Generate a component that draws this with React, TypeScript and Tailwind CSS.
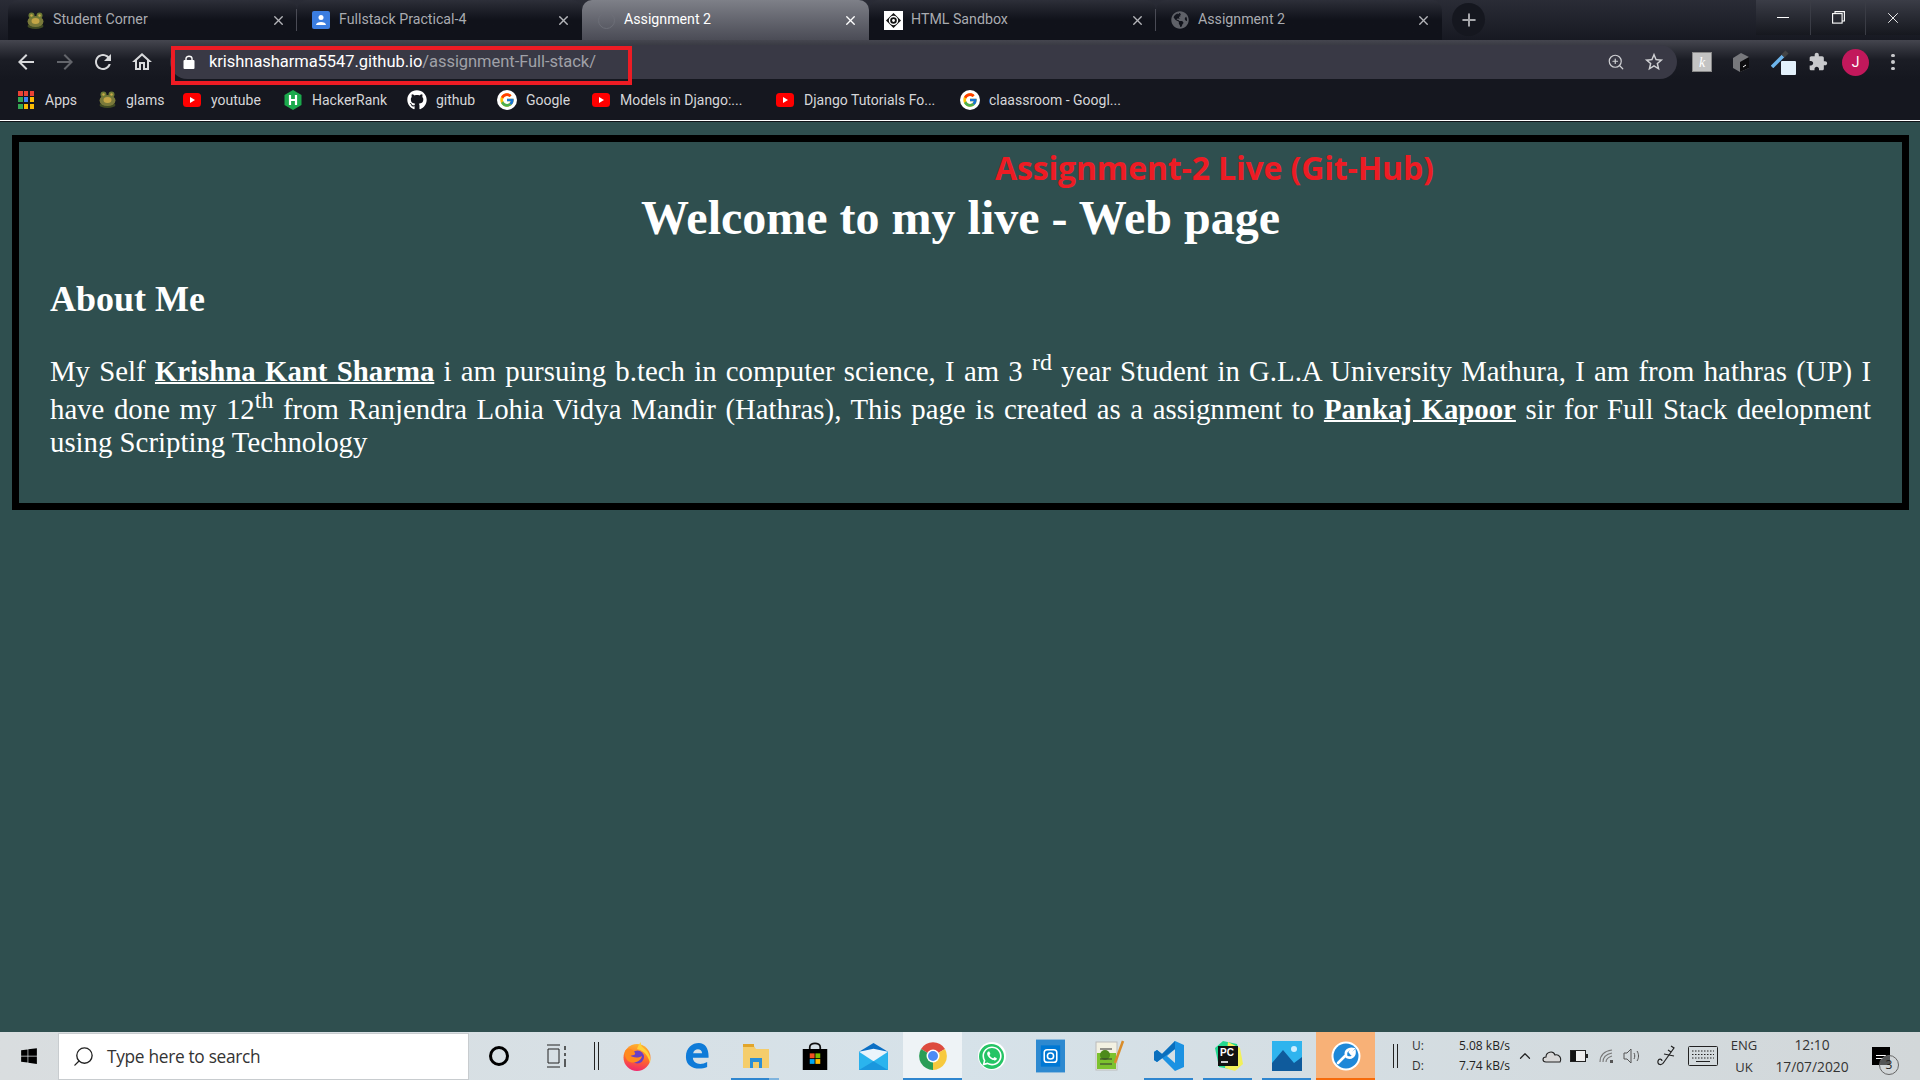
import React from "react";
import { X, Plus, ZoomIn, Search, ChevronUp } from "lucide-react";
import { FaGithub, FaWindows, FaWhatsapp, FaGlobeAmericas } from "react-icons/fa";
import { FcGoogle } from "react-icons/fc";

const uiFont = "font-['Roboto','Liberation_Sans',sans-serif]";

function Mat({ d, size = 24, className }: { d: string; size?: number; className?: string }) {
  return (
    <svg width={size} height={size} viewBox="0 0 24 24" fill="currentColor" className={className}>
      <path d={d} />
    </svg>
  );
}
const BACK = "M20 11H7.83l5.59-5.59L12 4l-8 8 8 8 1.41-1.41L7.83 13H20v-2z";
const FORWARD = "M4 13h12.17l-5.59 5.59L12 20l8-8-8-8-1.41 1.41L16.17 11H4v2z";
const RELOAD = "M17.65 6.35C16.2 4.9 14.21 4 12 4c-4.42 0-7.99 3.58-7.99 8s3.57 8 7.99 8c3.73 0 6.84-2.55 7.73-6h-2.08c-.82 2.33-3.04 4-5.65 4-3.31 0-6-2.69-6-6s2.69-6 6-6c1.66 0 3.14.69 4.22 1.78L13 11h7V4l-2.35 2.35z";
const HOME = "M12 5.69l5 4.5V18h-2v-6H9v6H7v-7.81l5-4.5M12 3L2 12h3v8h6v-6h2v6h6v-8h3L12 3z";
const STAR = "M22 9.24l-7.19-.62L12 2 9.19 8.63 2 9.24l5.46 4.73L5.82 21 12 17.27 18.18 21l-1.63-7.03L22 9.24zM12 15.4l-3.76 2.27 1-4.28-3.32-2.88 4.38-.38L12 6.1l1.71 4.04 4.38.38-3.32 2.88 1 4.28L12 15.4z";
const EXT = "M20.5 11H19V7c0-1.1-.9-2-2-2h-4V3.5C13 2.12 11.88 1 10.5 1S8 2.12 8 3.5V5H4c-1.1 0-1.99.9-1.99 2v3.8H3.5c1.49 0 2.7 1.21 2.7 2.7s-1.21 2.7-2.7 2.7H2V20c0 1.1.9 2 2 2h3.8v-1.5c0-1.49 1.21-2.7 2.7-2.7 1.49 0 2.7 1.21 2.7 2.7V22H17c1.1 0 2-.9 2-2v-4h1.5c1.38 0 2.5-1.12 2.5-2.5S21.88 11 20.5 11z";

function Frog() {
  return (
    <svg width="19" height="19" viewBox="0 0 19 19">
      <ellipse cx="9.5" cy="15" rx="8" ry="3" fill="#3f4a22" />
      <ellipse cx="9.5" cy="10.5" rx="8" ry="5.5" fill="#79793a" />
      <circle cx="5.5" cy="4.5" r="3" fill="#6d7a35" />
      <circle cx="13.5" cy="4.5" r="3" fill="#6d7a35" />
      <circle cx="5.5" cy="4.5" r="1.2" fill="#caa94a" />
      <circle cx="13.5" cy="4.5" r="1.2" fill="#caa94a" />
      <ellipse cx="9.5" cy="10" rx="4" ry="3" fill="#c3a546" />
    </svg>
  );
}
function Docs() {
  return (
    <svg width="20" height="20" viewBox="0 0 20 20">
      <rect x="1" y="1" width="18" height="18" rx="2" fill="#3b7de0" />
      <circle cx="10" cy="7.5" r="2.5" fill="#fff" />
      <path d="M5 15 C5 11 15 11 15 15 Z" fill="#fff" />
    </svg>
  );
}
function Sandbox() {
  return (
    <svg width="19" height="19" viewBox="0 0 19 19">
      <rect width="19" height="19" fill="#fff" />
      <path d="M9.5 2 L17 9.5 L9.5 17 L2 9.5 Z" fill="#111" />
      <circle cx="9.5" cy="9.5" r="4" fill="none" stroke="#fff" strokeWidth="1.4" />
      <circle cx="9.5" cy="9.5" r="1.4" fill="#fff" />
    </svg>
  );
}
function Tab({ title, icon, active, sep, width, first }: { title: string; icon?: React.ReactNode; active?: boolean; sep?: boolean; width: string; first?: boolean }) {
  return (
    <div className={`relative h-[40px] shrink-0 flex items-center rounded-t-[10px] pr-[11px] ${first ? "pl-[16px]" : "pl-[13px]"} ${width} ${active ? "bg-gradient-to-b from-[#7e8088] to-[#4b4c56]" : "bg-gradient-to-b from-[#2d2f39] via-[#10121a] to-[#10121a]"}`}>
      <div className="w-[22px] h-[20px] flex items-center justify-center shrink-0">{icon}</div>
      <span className={`ml-[7px] text-[14.2px] flex-1 ${active ? "text-white" : "text-[#a9abb0]"}`}>{title}</span>
      <X size={15} strokeWidth={2.2} className={active ? "text-white" : "text-[#b4b5b9]"} />
      {sep && <div className="absolute right-0 top-[9px] h-[22px] w-px bg-[#4a4b55]" />}
    </div>
  );
}
function YT() {
  return (
    <svg width="18" height="14" viewBox="0 0 18 14">
      <rect width="18" height="14" rx="3.5" fill="#f00" />
      <path d="M7 4 L12 7 L7 10 Z" fill="#fff" />
    </svg>
  );
}
function HR() {
  return (
    <svg width="18" height="20" viewBox="0 0 18 20">
      <path d="M9 0 L17.5 5 V15 L9 20 L0.5 15 V5 Z" fill="#1ba94c" />
      <path d="M6 5 V15 M12 5 V15 M6 10 H12" stroke="#fff" strokeWidth="2.2" />
    </svg>
  );
}
function Apps() {
  const colors = ["#ea4335", "#ea4335", "#ea4335", "#34a853", "#4285f4", "#fbbc04", "#34a853", "#fbbc04", "#fbbc04"];
  return (
    <div className="grid grid-cols-3 gap-[1.5px] w-[16px]">
      {colors.map((c, i) => (
        <div key={i} className="h-[5px] w-[4.5px]" style={{ backgroundColor: c }} />
      ))}
    </div>
  );
}
function Bookmark({ icon, label, w }: { icon: React.ReactNode; label: string; w: string }) {
  return (
    <div className={`flex items-center shrink-0 ${w}`}>
      <div className="flex items-center justify-center w-[20px] h-[20px] mr-[9px]">{icon}</div>
      <span className="text-[14px] pt-[1px] text-[#d5d6d9]">{label}</span>
    </div>
  );
}
function GoogleG() {
  return (
    <div className="w-[20px] h-[20px] rounded-full bg-white flex items-center justify-center">
      <FcGoogle size={16} />
    </div>
  );
}
function Firefox() {
  return (
    <svg width="28" height="29" viewBox="0 0 28 29">
      <defs>
        <linearGradient id="ff" x1="0.6" y1="0" x2="0.4" y2="1">
          <stop offset="0" stopColor="#ffb52e" />
          <stop offset="0.55" stopColor="#ff6a2b" />
          <stop offset="1" stopColor="#f0246e" />
        </linearGradient>
      </defs>
      <circle cx="14" cy="15.5" r="13.5" fill="url(#ff)" />
      <path d="M18 0 C17 4 20 5 23 8 C27 12 28 17 27 21 C24 10 18 8 14 7 C15 4 16 2 18 0 Z" fill="#ffd23a" />
      <circle cx="14.5" cy="15" r="6.5" fill="#6a3fc4" />
      <path d="M2 9 C5 5 10 7 12 11 C13 13 9 14 6 13 C9 15 14 17 19 14 C18 20 9 23 4 18 C2 15 1 12 2 9 Z" fill="#ff8a1e" />
    </svg>
  );
}
function Edge() {
  return (
    <svg width="24" height="26" viewBox="0 0 26 28">
      <path d="M1 15 C1 5 8 0 15 0 C22 0 26 6 25.5 16 H8.5 C8.8 22.5 17 24.5 24 20.5 V26 C14 30 1 27 1 15 Z M8.8 11 H18.5 C18.5 5.5 10 5 8.8 11 Z" fill="#0f7bd8" fillRule="evenodd" />
    </svg>
  );
}
function Explorer() {
  return (
    <svg width="26" height="24" viewBox="0 0 26 24">
      <path d="M0 2 H11 L13 5 H26 V24 H0 Z" fill="#f5cd6b" />
      <path d="M0 0 H11 V3 H0 Z" fill="#e2a52a" />
      <path d="M7 24 V14 H19 V24 H16 V18 H10 V24 Z" fill="#2b8fd6" />
    </svg>
  );
}
function Store() {
  return (
    <svg width="28" height="28" viewBox="0 0 28 32">
      <path d="M8 9 V6 C8 0 20 0 20 6 V9" fill="none" stroke="#111" strokeWidth="2" />
      <rect y="8" width="28" height="24" fill="#000" />
      <rect x="8" y="13" width="5.5" height="5.5" fill="#f25022" />
      <rect x="14.5" y="13" width="5.5" height="5.5" fill="#7fba00" />
      <rect x="8" y="19.5" width="5.5" height="5.5" fill="#00a4ef" />
      <rect x="14.5" y="19.5" width="5.5" height="5.5" fill="#ffb900" />
    </svg>
  );
}
function Mail() {
  return (
    <svg width="29" height="27" viewBox="0 0 30 28">
      <path d="M0 9 L15 0 L30 9 V28 H0 Z" fill="#0b6fc4" />
      <path d="M0 9 H30 V28 H0 Z" fill="#2bb4ee" />
      <path d="M0 9 L15 19 L30 9 L15 6 Z" fill="#eaf4fb" />
      <path d="M0 28 L15 19 L30 28 Z" fill="#1a97de" />
    </svg>
  );
}
function Chrome() {
  return (
    <svg width="28" height="32" viewBox="0 0 28 32">
      <g transform="translate(0,2)">
        <path d="M14 14 L2 7 A14 14 0 0 1 26 7 Z" fill="#dd4b3e" />
        <path d="M14 14 L26 7 A14 14 0 0 1 14 28 Z" fill="#f7c93e" />
        <path d="M14 14 L14 28 A14 14 0 0 1 2 7 Z" fill="#2a9d57" />
        <circle cx="14" cy="14" r="6.5" fill="#fff" />
        <circle cx="14" cy="14" r="5" fill="#4c8bf5" />
      </g>
    </svg>
  );
}
function Whats() {
  return (
    <div className="w-[28px] h-[28px] rounded-full bg-white flex items-center justify-center">
      <div className="w-[25px] h-[25px] rounded-full bg-[#25c465] flex items-center justify-center">
        <FaWhatsapp size={22} className="text-white" />
      </div>
    </div>
  );
}
function Insta() {
  return (
    <svg width="29" height="34" viewBox="0 0 30 34">
      <rect width="30" height="34" fill="#2d89d0" />
      <rect x="5" y="6" width="20" height="22" fill="#0078d4" />
      <rect x="8.5" y="10.5" width="13" height="13" rx="3" fill="none" stroke="#fff" strokeWidth="1.6" />
      <circle cx="15" cy="17" r="3.2" fill="none" stroke="#fff" strokeWidth="1.6" />
    </svg>
  );
}
function Notepad() {
  return (
    <svg width="30" height="34" viewBox="0 0 30 34">
      <rect x="1" y="3" width="21" height="28" fill="#f3f1e2" stroke="#bbb" />
      <rect x="2" y="14" width="19" height="16" fill="#7cc22e" />
      <circle cx="10" cy="16" r="5" fill="#4d8a1c" />
      <path d="M28 2 L20 24" stroke="#d98c2a" strokeWidth="2.5" />
      <path d="M5 10 H17 M5 20 H17 M5 25 H17" stroke="#333" strokeWidth="1" />
    </svg>
  );
}
function VSCode() {
  return (
    <svg width="30" height="34" viewBox="0 0 30 30">
      <path d="M21 0 L30 4 V26 L21 30 L8 17 L3 21 L0 19 V11 L3 9 L8 13 Z M21 8 L13 15 L21 22 Z" fill="#1c92e2" fillRule="evenodd" />
      <path d="M21 0 L8 13 L3 9 L0 11 V19 L3 21 L21 8 Z" fill="#0b6fbd" />
    </svg>
  );
}
function PyCharm() {
  return (
    <svg width="30" height="32" viewBox="0 0 30 32">
      <path d="M2 8 L10 1 L24 4 L29 24 L22 30 L6 27 Z" fill="#22d88f" />
      <path d="M15 2 L27 8 L30 24 L22 31 L12 28 Z" fill="#f2f05a" />
      <rect x="5" y="6" width="20" height="20" fill="#111" />
      <path d="M8 22 H15" stroke="#fff" strokeWidth="1.6" />
      <text x="7" y="16" fontSize="10" fontWeight="700" fill="#fff" fontFamily="Liberation Sans">PC</text>
    </svg>
  );
}
function Photos() {
  return (
    <svg width="30" height="30" viewBox="0 0 30 30">
      <rect width="30" height="30" fill="#2fb4ee" />
      <path d="M0 22 L11 9 L22 22 L30 16 V30 H0 Z" fill="#0f5b9c" />
      <circle cx="22" cy="8" r="3" fill="#cdeeff" />
    </svg>
  );
}
function Wrench() {
  return (
    <svg width="30" height="30" viewBox="0 0 30 30">
      <circle cx="15" cy="15" r="14.5" fill="#fff" />
      <circle cx="15" cy="15" r="12.5" fill="#1e88d8" />
      <path d="M7 22 L15 14 M15 14 C14 10 18 7 22 8 L19 11 L20.5 13 L23.5 10.5 C24 15 20 18 16 16" stroke="#fff" strokeWidth="2.6" fill="none" strokeLinecap="round" />
    </svg>
  );
}
function Cell({ children, under, className }: { children: React.ReactNode; under?: boolean; className?: string }) {
  return (
    <div className={`relative w-[59px] h-[48px] shrink-0 flex items-center justify-center ${className ?? ""}`}>
      {children}
      {under && <div className="absolute bottom-0 left-[5px] right-[5px] h-[2px] bg-[#2f86cf]" />}
    </div>
  );
}

export default function App() {
  return (
    <div className={`relative w-[1920px] h-[1080px] flex flex-col overflow-hidden bg-[#2f4f4f] ${uiFont}`}>
      {/* Tab strip */}
      <div className="h-[40px] flex bg-gradient-to-b from-[#2a2c36] to-[#171922] pl-[8px] shrink-0">
        <Tab width="w-[289px]" first title="Student Corner" icon={<Frog />} sep />
        <Tab width="w-[285px]" title="Fullstack Practical-4" icon={<Docs />} />
        <Tab width="w-[287px]" title="Assignment 2" active icon={<div className="w-[17px] h-[17px] rounded-full border border-[#6d6f78]" />} />
        <Tab width="w-[287px]" title="HTML Sandbox" icon={<Sandbox />} sep />
        <Tab width="w-[286px]" title="Assignment 2" icon={<FaGlobeAmericas size={18} className="text-[#5f6168]" />} />
        <div className="ml-[10px] mt-[3px] w-[33px] h-[33px] rounded-full bg-[#15171f] flex items-center justify-center shrink-0">
          <Plus size={20} strokeWidth={2.4} className="text-[#a6a7ab]" />
        </div>
        <div className="ml-auto flex h-[35px] bg-gradient-to-b from-[#3b3d47] to-[#16181f] text-white">
          <div className="w-[55px] flex items-center justify-center border-r border-[#3a3c45]"><div className="w-[12px] h-px bg-white" /></div>
          <div className="w-[55px] flex items-center justify-center border-r border-[#3a3c45]">
            <svg width="13" height="13" viewBox="0 0 13 13" fill="none" stroke="#fff" strokeWidth="1.1"><rect x="0.6" y="2.6" width="9.5" height="9.5" /><path d="M3 2.5 V0.6 H12.4 V10 H10" /></svg>
          </div>
          <div className="w-[54px] flex items-center justify-center"><X size={18} strokeWidth={1.2} /></div>
        </div>
      </div>
      {/* Toolbar */}
      <div className="h-[39px] flex items-end bg-gradient-to-b from-[#45464f] via-[#1b1d25] to-[#15171f] shrink-0">
        <div className="w-[170px] h-[34px] flex items-center pl-[14px] gap-[14.5px] text-[#d8d9db] self-end">
          <Mat d={BACK} />
          <Mat d={FORWARD} className="text-[#63656b]" />
          <Mat d={RELOAD} />
          <Mat d={HOME} />
        </div>
        <div className="w-[1507px] h-[34px] bg-[#393945] rounded-l-[17px] rounded-tr-[17px] rounded-br-[17px] flex items-center pl-[13px] pr-[12px]">
          <svg width="12" height="14" viewBox="0 0 12 14"><rect x="0.5" y="5" width="11" height="9" rx="1" fill="#fff" /><path d="M3 6 V3.5 C3 0.5 9 0.5 9 3.5 V6" fill="none" stroke="#fff" strokeWidth="1.4" /></svg>
          <span className="ml-[14px] text-[16.5px] tracking-[-0.05px] text-white">krishnasharma5547.github.io<span className="text-[#a0a1a8]">/assignment-Full-stack/</span></span>
          <ZoomIn size={18} strokeWidth={1.6} className="ml-auto text-[#d0d1d4]" />
          <Mat d={STAR} size={22} className="ml-[18px] text-[#d0d1d4]" />
        </div>
        <div className="relative flex-1 h-[34px] flex items-center">
          <div className="ml-[15px] w-[20px] h-[20px] bg-[#c3c3c3] border border-[#888] flex items-center justify-center text-white text-[14px] font-['Liberation_Serif',serif] italic">k</div>
          <svg className="ml-[21px]" width="16" height="19" viewBox="0 0 16 19"><path d="M0 5 L8 0 L16 4 V15 L7 19 L0 15 Z" fill="#77787c" /><path d="M7 9 L16 4 V15 L7 19 Z" fill="#0d0d0f" /><path d="M10 14 L13 12" stroke="#fff" strokeWidth="1" /></svg>
          <div className="relative w-[27px] h-[28px] ml-[22px] mt-[4px]">
            <svg width="18" height="18" viewBox="0 0 18 18" className="absolute left-0 top-0"><path d="M1 17 L12 6" stroke="#6eb5ec" strokeWidth="3.5" /><path d="M12 6 L16 2" stroke="#444" strokeWidth="4.5" /></svg>
            <div className="absolute left-[10px] top-[11px] w-[15px] h-[14px] bg-[#e3f1fb] rounded-[1px]" />
          </div>
          <Mat d={EXT} size={20} className="ml-[10px] text-[#c8c9cc]" />
          <div className="ml-[14px] w-[27px] h-[27px] rounded-full bg-[#c2185b] text-white text-[14px] flex items-center justify-center">J</div>
          <div className="ml-[22px] flex flex-col gap-[3px]">
            <div className="w-[3.5px] h-[3.5px] rounded-full bg-[#c8c9cc]" />
            <div className="w-[3.5px] h-[3.5px] rounded-full bg-[#c8c9cc]" />
            <div className="w-[3.5px] h-[3.5px] rounded-full bg-[#c8c9cc]" />
          </div>
        </div>
      </div>
      {/* Bookmarks */}
      <div className="h-[41px] flex items-center bg-[#15171f] pl-[16px] shrink-0">
        <Bookmark w="w-[81px]" icon={<Apps />} label="Apps" />
        <Bookmark w="w-[85px]" icon={<Frog />} label="glams" />
        <Bookmark w="w-[101px]" icon={<YT />} label="youtube" />
        <Bookmark w="w-[124px]" icon={<HR />} label="HackerRank" />
        <Bookmark w="w-[90px]" icon={<FaGithub size={20} className="text-white" />} label="github" />
        <Bookmark w="w-[94px]" icon={<GoogleG />} label="Google" />
        <Bookmark w="w-[184px]" icon={<YT />} label="Models in Django:..." />
        <Bookmark w="w-[185px]" icon={<YT />} label="Django Tutorials Fo..." />
        <Bookmark w="w-[170px]" icon={<GoogleG />} label="claassroom - Googl..." />
      </div>
      <div className="h-px bg-white shrink-0" />
      <div className="h-px bg-[#101418] shrink-0" />
      {/* Page */}
      <main className="flex-1 pt-[13px] pl-[12px] pr-[11px] font-['Liberation_Serif',serif] text-white">
        <div className="h-[375px] border-[7px] border-black px-[31px] pt-[48px]">
          <h1 className="text-center font-bold text-[48px] leading-[56px]">Welcome to my live - Web page</h1>
          <h2 className="mt-[32px] font-bold text-[36px] leading-[42px]">About Me</h2>
          <p className="mt-[29.5px] text-[28.8px] leading-[33.5px] text-justify">
            My Self <b className="underline">Krishna Kant Sharma</b> i am pursuing b.tech in computer science, I am 3 <sup className="static align-super text-[smaller] leading-[25px]">rd</sup> year Student in G.L.A University Mathura, I am from hathras (UP) I have done my 12<sup className="static align-super text-[smaller] leading-[25px]">th</sup> from Ranjendra Lohia Vidya Mandir (Hathras), This page is created as a assignment to <b className="underline">Pankaj Kapoor</b> sir for Full Stack deelopment using Scripting Technology
          </p>
        </div>
      </main>
      {/* Taskbar */}
      <footer className="h-[48px] flex items-center bg-gradient-to-r from-[#d9dddf] via-[#d6e2e9] to-[#d2d7d9] text-black shrink-0">
        <div className="w-[58px] flex items-center justify-center"><FaWindows size={18} className="text-black" /></div>
        <div className="w-[411px] h-[47px] mt-[1px] bg-white border border-[#c8cccf] flex items-center pl-[13px]">
          <Search size={23} strokeWidth={1.4} className="-scale-x-100 text-[#222]" />
          <span className="ml-[12px] pt-[1px] text-[17.3px] text-[#333] font-['Open_Sans',sans-serif] tracking-[-0.3px]">Type here to search</span>
        </div>
        <Cell><div className="w-[20px] h-[20px] rounded-full border-[3px] border-black" /></Cell>
        <div className="w-[57px] flex items-center justify-center">
          <svg width="22" height="24" viewBox="0 0 22 24" fill="none" stroke="#222" strokeWidth="1"><path d="M1 1 H14 M1 23 H14 M2 5 H13 V19 H2 Z" /><path d="M19 2 V6 M19 9 V12 M19 15 V23" strokeWidth="1.4" /></svg>
        </div>
        <div className="w-[22px] h-[28px] flex justify-center"><div className="w-[5px] h-[28px] border-x border-[#222]" /></div>
        <Cell><Firefox /></Cell>
        <Cell className="ml-[1px]"><Edge /></Cell>
        <Cell>
          <Explorer />
          <div className="absolute bottom-0 left-[5px] w-[38px] h-[2px] bg-[#2f86cf]" />
          <div className="absolute bottom-0 left-[43px] w-[10px] h-[2px] bg-[#7fb4de]" />
        </Cell>
        <Cell><Store /></Cell>
        <Cell><Mail /></Cell>
        <Cell className="bg-[#eef3f6]"><Chrome /><div className="absolute bottom-0 inset-x-0 h-[2px] bg-[#2f86cf]" /></Cell>
        <Cell><Whats /></Cell>
        <Cell><Insta /></Cell>
        <Cell><Notepad /></Cell>
        <Cell under><VSCode /></Cell>
        <Cell under><PyCharm /></Cell>
        <Cell under><Photos /></Cell>
        <Cell className="bg-[#f8b177]"><Wrench /><div className="absolute bottom-0 inset-x-0 h-[2px] bg-[#f76b0a]" /></Cell>
        <div className="ml-[18px] w-[5px] h-[24px] border-x border-[#222] shrink-0" />
        <div className="ml-[14px] w-[20px] flex flex-col text-[12px] leading-[20px] text-[#333] font-['Open_Sans',sans-serif]"><span>U:</span><span>D:</span></div>
        <div className="w-[78px] flex flex-col items-end text-[12px] leading-[20px] text-[#222] font-['Open_Sans',sans-serif]"><span>5.08 kB/s</span><span>7.74 kB/s</span></div>
        <ChevronUp size={18} strokeWidth={1.6} className="ml-[6px] text-[#222]" />
        <svg className="ml-[8px]" width="20" height="14" viewBox="0 0 20 14"><path d="M4 13 C0 13 0 8 4 8 C4 3 11 1 13 6 C17 5 20 9 18 13 Z" fill="#d8d8d8" stroke="#222" strokeWidth="1.1" /></svg>
        <svg className="ml-[8px]" width="18" height="12" viewBox="0 0 18 12"><rect x="0.5" y="0.5" width="15" height="11" fill="#eee" stroke="#222" /><rect x="1" y="1" width="5" height="10" fill="#111" /><rect x="16" y="4" width="2" height="4" fill="#222" /></svg>
        <svg className="ml-[11px]" width="15" height="15" viewBox="0 0 15 15" fill="none" stroke="#777" strokeWidth="1.1"><path d="M1 13 C1 6 6 2 13 1 M4 13 C4 8 8 5 13 4 M7 13 C7 10 10 8 13 7" /><rect x="11" y="11" width="3" height="3" fill="#555" stroke="none" /></svg>
        <svg className="ml-[9px]" width="18" height="16" viewBox="0 0 18 16" fill="none" stroke="#555" strokeWidth="1"><path d="M1 5 H4 L8 1 V15 L4 11 H1 Z" /><path d="M11 5 C12 7 12 9 11 11 M14 3 C16 6 16 10 14 13" /></svg>
        <svg className="ml-[15px]" width="20" height="22" viewBox="0 0 20 22" fill="none" stroke="#222" strokeWidth="1.2"><path d="M15 1 L18 3 L8 17 C6 21 1 20 2 16 C3 13 6 14 6 16" /><path d="M12 5 L15 7 M8 9 L18 11" /></svg>
        <svg className="ml-[12px]" width="30" height="20" viewBox="0 0 30 20" fill="none" stroke="#222" strokeWidth="1"><rect x="0.5" y="0.5" width="29" height="19" rx="1" /><path d="M4 5 H26 M4 8.5 H26 M4 12 H26" strokeDasharray="1.5 1.5" /><path d="M8 15.5 H22" /></svg>
        <div className="ml-[8px] w-[36px] flex flex-col items-center text-[13px] leading-[22px] text-[#333] font-['Open_Sans',sans-serif]"><span>ENG</span><span>UK</span></div>
        <div className="ml-[12px] w-[76px] flex flex-col items-center text-[13.8px] leading-[22px] text-[#333] font-['Open_Sans',sans-serif]"><span>12:10</span><span>17/07/2020</span></div>
        <div className="relative ml-[22px] w-[18px] h-[18px] bg-black">
          <div className="absolute left-[4px] top-[8px] w-[10px] h-[1px] bg-white" />
          <div className="absolute left-[4px] top-[11px] w-[7px] h-[1px] bg-white" />
          <div className="absolute left-[7px] top-[8px] w-[20px] h-[20px] rounded-full border border-[#666] text-[12px] leading-[18px] text-center text-[#222] bg-[#d0d5d7]/40 font-['Open_Sans',sans-serif]">3</div>
        </div>
      </footer>
      {/* Annotations drawn over the screenshot */}
      <div className="absolute left-[171px] top-[46px] w-[461px] h-[39px] border-[4px] border-[#ed1c24]" />
      <div className="absolute left-[995px] top-[144px] text-[32px] font-bold text-[#ed1c24] font-['Open_Sans',sans-serif] tracking-[-0.15px] whitespace-nowrap">Assignment-2 Live (Git-Hub)</div>
    </div>
  );
}
